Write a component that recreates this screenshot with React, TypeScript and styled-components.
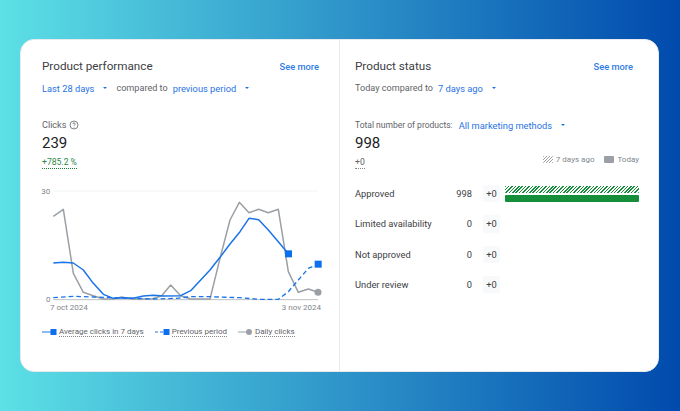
import React from 'react'
import styled, { createGlobalStyle } from 'styled-components'

const GlobalStyle = createGlobalStyle`
  html, body {
    margin: 0;
    padding: 0;
    width: 680px;
    height: 411px;
    overflow: hidden;
    font-family: Roboto, "Liberation Sans", sans-serif;
  }
`

const Page = styled.div`
  width: 680px;
  height: 411px;
  box-sizing: border-box;
  padding: 39px 21px 39px 20px;
  background: linear-gradient(90deg, #5de0e6 0%, #004aad 100%);
`

const Card = styled.div`
  height: 100%;
  display: grid;
  grid-template-columns: 319px 1fr;
  box-sizing: border-box;
  background: #fff;
  border: 1px solid #e8eaed;
  border-radius: 14px;
  overflow: hidden;
`

const Panel = styled.section<{ $divider?: boolean }>`
  display: flex;
  flex-direction: column;
  min-width: 0;
  box-sizing: border-box;
  padding: ${(p) => (p.$divider ? '17px 20px 0 21px' : '17px 19px 0 15px')};
  border-right: ${(p) => (p.$divider ? '1px solid #e8eaed' : 'none')};
`

const HeaderRow = styled.div`
  display: flex;
  justify-content: space-between;
  align-items: center;
  height: 18px;
`

const Title = styled.h2`
  margin: 0;
  font-size: 11.7px;
  font-weight: 400;
  color: #3c4043;
`

const SeeMore = styled.a<{ $inset?: number }>`
  margin-right: ${(p) => p.$inset || 0}px;
  font-size: 9.3px;
  font-weight: 500;
  color: #2f7de6;
`

const FilterRow = styled.div`
  display: flex;
  align-items: center;
  height: 14px;
  margin-top: 6px;
  font-size: 9.1px;
  color: #5f6368;
`

const Dropdown = styled.span`
  display: inline-flex;
  align-items: center;
  font-size: 9.3px;
  color: #1f73e6;
  &::after {
    content: '';
    margin-left: 9px;
    border-left: 2.5px solid transparent;
    border-right: 2.5px solid transparent;
    border-top: 2.5px solid #1a73e8;
  }
`

const Connector = styled.span<{ $left: number; $right: number }>`
  margin: 0 ${(p) => p.$right}px 0 ${(p) => p.$left}px;
`

const MetricLabel = styled.div`
  display: flex;
  align-items: center;
  gap: 3px;
  height: 14px;
  margin-top: 23px;
  font-size: 9.1px;
  color: #5f6368;
`

const MetricValue = styled.div`
  height: 22px;
  line-height: 22px;
  font-size: 15px;
  color: #202124;
`

const Delta = styled.span<{ $positive?: boolean }>`
  align-self: flex-start;
  margin-top: 3px;
  font-size: 8.6px;
  line-height: 11px;
  color: ${(p) => (p.$positive ? '#2b8a4a' : '#5f6368')};
  border-bottom: 1px dotted ${(p) => (p.$positive ? '#188038' : '#80868b')};
`

const ChartSvg = styled.svg`
  display: block;
  width: 284px;
  height: 122px;
  margin: 16px 0 0 -2px;
  overflow: visible;
`

const AxisDates = styled.div`
  display: flex;
  justify-content: space-between;
  width: 271px;
  margin: -4px 0 0 8px;
  font-size: 8px;
  color: #80868b;
`

const Legend = styled.div`
  display: flex;
  align-items: center;
  gap: 11px;
  margin-top: 15px;
`

const LegendItem = styled.div`
  display: flex;
  align-items: center;
  gap: 2px;
  font-size: 8px;
  color: #5f6368;
`

const LegendText = styled.span`
  border-bottom: 1px dotted #80868b;
  line-height: 9px;
`

const TotalRow = styled.div`
  display: flex;
  align-items: center;
  gap: 6px;
  height: 14px;
  margin-top: 23px;
  font-size: 8.5px;
  color: #5f6368;
`

const KeyRow = styled.div`
  display: flex;
  justify-content: space-between;
  align-items: flex-start;
`

const Key = styled.div`
  display: flex;
  align-items: center;
  gap: 10px;
  margin-top: 1px;
  font-size: 8px;
  color: #80868b;
`

const KeyItem = styled.span`
  display: flex;
  align-items: center;
  gap: 3px;
`

const Swatch = styled.i<{ $hatched?: boolean }>`
  display: block;
  width: 10px;
  height: 7px;
  border-radius: 1px;
  background: ${(p) =>
    p.$hatched
      ? 'repeating-linear-gradient(135deg, #9aa0a6 0 1px, #fff 1px 2.2px)'
      : '#9aa0a6'};
`

const StatusList = styled.div`
  display: flex;
  flex-direction: column;
  gap: 13px;
  margin-top: 16px;
`

const StatusRow = styled.div`
  display: grid;
  grid-template-columns: 90px 27px 28px 1fr;
  align-items: center;
  height: 17.3px;
  font-size: 9.3px;
  color: #3c4043;
`

const StatusName = styled.span`
  white-space: nowrap;
`

const StatusCount = styled.span`
  text-align: right;
`

const StatusChange = styled.span`
  display: flex;
  align-items: center;
  justify-content: center;
  width: 17px;
  height: 17.3px;
  margin-left: 11px;
  background: #f8f9fa;
  border-radius: 2px;
`

const Bars = styled.div`
  display: flex;
  flex-direction: column;
  gap: 2px;
  margin-left: 5px;
`

const Bar = styled.div<{ $hatched?: boolean }>`
  height: 7px;
  border-radius: 1px;
  background: ${(p) =>
    p.$hatched
      ? 'repeating-linear-gradient(135deg, #158f39 0 1.1px, #fff 1.1px 2.4px)'
      : '#158f39'};
`

const grey = '100,124 130,103 160,295 190,352 220,362 250,372 280,372 305,366 335,372 365,372 395,372 425,362 452,330 482,362 512,372 570,372 600,250 630,135 658,82 687,113 716,103 745,113 775,103 805,290 835,352 865,342 894,352'
const blue = '100,264 130,262 160,264 190,285 220,325 250,358 280,370 310,368 340,370 370,363 400,361 430,363 482,362 512,347 570,285 600,247 630,207 660,170 687,130 716,134 745,165 775,200 805,236'
const previous = '100,368 160,364 220,366 280,368 340,370 400,372 470,370 512,365 570,365 660,368 716,373 775,373 805,350 835,315 865,280 894,267'

const statuses = [
  { name: 'Approved', count: 998 },
  { name: 'Limited availability', count: 0 },
  { name: 'Not approved', count: 0 },
  { name: 'Under review', count: 0 },
]

const HelpIcon = () => (
  <svg width="10" height="10" viewBox="0 0 10 10" fill="none" stroke="#5f6368" strokeWidth="0.8">
    <circle cx="5" cy="5" r="4" />
    <path d="M3.8 4c0-.7.5-1.2 1.2-1.2s1.2.5 1.2 1.1c0 .9-1.2 1-1.2 1.9" />
    <path d="M5 6.8v.7" />
  </svg>
)

const LegendMark = ({ dashed, round }: { dashed?: boolean; round?: boolean }) => (
  <svg width="15" height="8" viewBox="0 0 15 8">
    <path
      d="M0 4H11"
      stroke={round ? '#9aa0a6' : '#1a73e8'}
      strokeWidth="1"
      strokeDasharray={dashed ? '3 2' : undefined}
    />
    {round ? (
      <circle cx="11" cy="4" r="3" fill="#9aa0a6" />
    ) : (
      <rect x="8.5" y="1" width="6" height="6" fill="#0b6fee" />
    )}
  </svg>
)

const App = () => {
  return (
    <Page>
      <GlobalStyle />
      <Card>
        <Panel $divider>
          <HeaderRow>
            <Title>Product performance</Title>
            <SeeMore>See more</SeeMore>
          </HeaderRow>
          <FilterRow>
            <Dropdown>Last 28 days</Dropdown>
            <Connector $left={9} $right={5}>compared to</Connector>
            <Dropdown>previous period</Dropdown>
          </FilterRow>
          <MetricLabel>
            Clicks <HelpIcon />
          </MetricLabel>
          <MetricValue>239</MetricValue>
          <Delta $positive>+785.2 %</Delta>
          <ChartSvg viewBox="60 30 852 366">
            <path d="M100 48H894" stroke="#f1f3f4" strokeWidth="3" />
            <path d="M100 374H894" stroke="#bdc1c6" strokeWidth="3" />
            <text x="64" y="58" fontSize="24" fill="#80868b">30</text>
            <text x="78" y="381" fontSize="24" fill="#80868b">0</text>
            <polyline points={grey} fill="none" stroke="#9aa0a6" strokeWidth="4.5" strokeLinejoin="round" />
            <polyline points={blue} fill="none" stroke="#1a73e8" strokeWidth="4.5" strokeLinejoin="round" />
            <polyline points={previous} fill="none" stroke="#1a73e8" strokeWidth="4" strokeDasharray="14 9" />
            <rect x="795" y="226" width="21" height="21" fill="#0b6fee" />
            <rect x="884" y="257" width="21" height="21" fill="#0b6fee" />
            <circle cx="894" cy="352" r="10.5" fill="#9aa0a6" />
          </ChartSvg>
          <AxisDates>
            <span>7 oct 2024</span>
            <span>3 nov 2024</span>
          </AxisDates>
          <Legend>
            <LegendItem>
              <LegendMark />
              <LegendText>Average clicks in 7 days</LegendText>
            </LegendItem>
            <LegendItem>
              <LegendMark dashed />
              <LegendText>Previous period</LegendText>
            </LegendItem>
            <LegendItem>
              <LegendMark round />
              <LegendText>Daily clicks</LegendText>
            </LegendItem>
          </Legend>
        </Panel>
        <Panel>
          <HeaderRow>
            <Title>Product status</Title>
            <SeeMore $inset={6}>See more</SeeMore>
          </HeaderRow>
          <FilterRow>
            <Connector $left={0} $right={5}>Today compared to</Connector>
            <Dropdown>7 days ago</Dropdown>
          </FilterRow>
          <TotalRow>
            Total number of products:
            <Dropdown>All marketing methods</Dropdown>
          </TotalRow>
          <MetricValue>998</MetricValue>
          <KeyRow>
            <Delta>+0</Delta>
            <Key>
              <KeyItem>
                <Swatch $hatched />7 days ago
              </KeyItem>
              <KeyItem>
                <Swatch />Today
              </KeyItem>
            </Key>
          </KeyRow>
          <StatusList>
            {statuses.map((s) => (
              <StatusRow key={s.name}>
                <StatusName>{s.name}</StatusName>
                <StatusCount>{s.count}</StatusCount>
                <StatusChange>+0</StatusChange>
                {s.count > 0 ? (
                  <Bars>
                    <Bar $hatched />
                    <Bar />
                  </Bars>
                ) : (
                  <span />
                )}
              </StatusRow>
            ))}
          </StatusList>
        </Panel>
      </Card>
    </Page>
  )
}

export default App
